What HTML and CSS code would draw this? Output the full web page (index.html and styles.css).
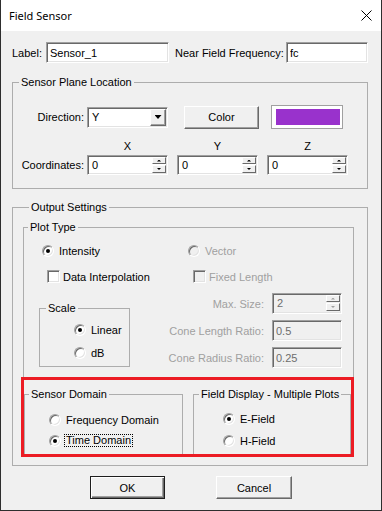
FILE: index.html
```html
<!DOCTYPE html>
<html lang="en">
<head>
  <meta charset="UTF-8" />
  <title>Field Sensor</title>
  <link rel="stylesheet" href="styles.css">
</head>
<body>

  <div class="window">
    <!-- title bar -->
    <div class="titlebar">
      <span class="title">Field Sensor</span>
      <svg class="close" width="11" height="11" viewBox="0 0 11 11">
        <path d="M0.5 0.5L10.5 10.5M10.5 0.5L0.5 10.5" stroke="#000" stroke-width="1" fill="none"/>
      </svg>
    </div>

    <div class="dialog">
      <!-- label + frequency -->
      <div class="label-row">
        <span class="lbl-label">Label:</span>
        <input class="field w-label" value="Sensor_1" />
        <span class="lbl-freq">Near Field Frequency:</span>
        <input class="field w-freq" value="fc" />
      </div>

      <!-- sensor plane -->
      <fieldset class="group plane">
        <legend>Sensor Plane Location</legend>
        <div class="dir-row">
          <span class="row-label">Direction:</span>
          <div class="combo">
            <span class="combo-text">Y</span>
            <span class="combo-btn"></span>
          </div>
          <button class="btn btn-color">Color</button>
          <div class="swatch"><div class="swatch-fill"></div></div>
        </div>
        <div class="axis-row">
          <span class="axis">X</span>
          <span class="axis">Y</span>
          <span class="axis">Z</span>
        </div>
        <div class="coord-row">
          <span class="row-label">Coordinates:</span>
          <div class="spin">
            <span class="spin-text">0</span>
            <span class="spin-btns"><span class="spin-btn up"></span><span class="spin-btn down"></span></span>
          </div>
          <div class="spin">
            <span class="spin-text">0</span>
            <span class="spin-btns"><span class="spin-btn up"></span><span class="spin-btn down"></span></span>
          </div>
          <div class="spin">
            <span class="spin-text">0</span>
            <span class="spin-btns"><span class="spin-btn up"></span><span class="spin-btn down"></span></span>
          </div>
        </div>
      </fieldset>

      <!-- output settings -->
      <fieldset class="group output">
        <legend>Output Settings</legend>

        <fieldset class="group plot">
          <legend>Plot Type</legend>

          <div class="opt-row radios">
            <span class="opt first"><span class="radio on"></span>Intensity</span>
            <span class="opt disabled"><span class="radio off"></span>Vector</span>
          </div>
          <div class="opt-row checks">
            <span class="opt first"><span class="check"></span>Data Interpolation</span>
            <span class="opt disabled"><span class="check off"></span>Fixed Length</span>
          </div>

          <div class="scale-row">
            <fieldset class="group scale">
              <legend>Scale</legend>
              <div class="stack">
                <span class="opt"><span class="radio on"></span>Linear</span>
                <span class="opt"><span class="radio"></span>dB</span>
              </div>
            </fieldset>

            <div class="vector-opts">
              <span class="opt-label">Max. Size:</span>
              <div class="spin off">
                <span class="spin-text">2</span>
                <span class="spin-btns"><span class="spin-btn up"></span><span class="spin-btn down"></span></span>
              </div>
              <span class="opt-label">Cone Length Ratio:</span>
              <input class="field off" value="0.5" />
              <span class="opt-label">Cone Radius Ratio:</span>
              <input class="field off" value="0.25" />
            </div>
          </div>

          <!-- highlighted part -->
          <div class="highlight">
            <fieldset class="group domain">
              <legend>Sensor Domain</legend>
              <div class="stack">
                <span class="opt"><span class="radio"></span>Frequency Domain</span>
                <span class="opt focused"><span class="radio on"></span><span class="focus">Time Domain</span></span>
              </div>
            </fieldset>
            <fieldset class="group display">
              <legend>Field Display - Multiple Plots</legend>
              <div class="stack">
                <span class="opt"><span class="radio on"></span>E-Field</span>
                <span class="opt"><span class="radio"></span>H-Field</span>
              </div>
            </fieldset>
          </div>
        </fieldset>
      </fieldset>

      <div class="actions">
        <button class="btn btn-ok">OK</button>
        <button class="btn btn-cancel">Cancel</button>
      </div>
    </div>
  </div>

</body>
</html>
```

FILE: styles.css
```css
body {
  margin: 0;
  font-family: "Liberation Sans", Arial, sans-serif;
  font-size: 11px;
  color: #000;
  background: #f0f0f0;
}

.window {
  width: 382px;
  height: 511px;
  box-sizing: border-box;
  border: 1px solid #2e2e2e;
  border-top: 0;
  display: flex;
  flex-direction: column;
  background: #f0f0f0;
}

/* title bar */
.titlebar {
  height: 31px;
  flex-shrink: 0;
  background: #fff;
  display: flex;
  align-items: center;
  justify-content: space-between;
  padding: 0 9px 0 8px;
}
.title {
  font-family: "Noto Sans", "Liberation Sans", sans-serif;
  font-size: 11px;
}
.close {
  display: block;
}

.dialog {
  flex: 1;
  padding: 11px 0 0 11px;
}

/* sunken text field */
.field, .combo, .spin {
  box-sizing: border-box;
  border: 1px solid;
  border-color: #a0a0a0 #fff #fff #a0a0a0;
  box-shadow: inset 1px 1px 0 #696969, inset -1px -1px 0 #e3e3e3;
  background: #fff;
}
.field {
  height: 21px;
  margin: 0;
  padding: 0 0 0 3px;
  font: inherit;
  color: #000;
  outline: none;
}
.field.off, .spin.off {
  background: #f0f0f0;
  color: #6d6d6d;
}

/* raised button */
.btn {
  box-sizing: border-box;
  margin: 0;
  padding: 0;
  font: inherit;
  color: #000;
  background: #f0f0f0;
  border: 1px solid;
  border-color: #fff #696969 #696969 #fff;
  box-shadow: inset -1px -1px 0 #a0a0a0;
}

/* group box */
.group {
  box-sizing: border-box;
  margin: 0;
  padding: 0;
  min-width: 0;
  border: 1px solid #adadad;
}
.group > legend {
  padding: 0 2px;
  height: 13px;
  line-height: 13px;
}

/* label row */
.label-row {
  display: flex;
  align-items: center;
  height: 21px;
}
.lbl-label { width: 34px; }
.w-label { width: 123px; }
.lbl-freq { width: 111px; padding-left: 6px; }
.w-freq { width: 82px; }

/* sensor plane */
.plane {
  margin-top: 13px;
  width: 356px;
  padding-bottom: 13px;
}
.plane > legend { margin-left: 6px; }

.row-label {
  width: 71px;
  flex-shrink: 0;
  text-align: right;
}
.dir-row {
  display: flex;
  align-items: center;
  height: 24px;
  margin-top: 16px;
}
.combo {
  margin-left: 3px;
  width: 81px;
  height: 21px;
  padding: 1px;
  display: flex;
  align-items: stretch;
}
.combo-text {
  flex: 1;
  padding-left: 3px;
  line-height: 17px;
}
.combo-btn {
  width: 16px;
  box-sizing: border-box;
  background: #f0f0f0;
  border: 1px solid;
  border-color: #fff #696969 #696969 #fff;
  box-shadow: inset -1px -1px 0 #a0a0a0;
  display: flex;
  align-items: center;
  justify-content: center;
}
.combo-btn::after {
  content: "";
  width: 7px;
  height: 4px;
  background: #000;
  clip-path: polygon(0 0, 100% 0, 50% 100%);
}
.btn-color {
  margin-left: 16px;
  width: 75px;
  height: 23px;
}
.swatch {
  margin-left: 12px;
  width: 72px;
  height: 24px;
  box-sizing: border-box;
  border: 1px solid #a0a0a0;
  background: #fff;
  padding: 3px 2px 3px 4px;
}
.swatch-fill {
  height: 100%;
  background: #9932cc;
}

.axis-row {
  display: flex;
  gap: 9px;
  margin-top: 11px;
  padding-left: 74px;
  height: 13px;
  line-height: 13px;
}
.axis {
  width: 81px;
  text-align: center;
}
.coord-row {
  display: flex;
  align-items: center;
  margin-top: 2px;
  height: 20px;
}
.coord-row .spin { margin-left: 9px; }
.coord-row .spin:first-of-type { margin-left: 3px; }

/* spin box */
.spin {
  width: 81px;
  height: 20px;
  padding: 1px;
  display: flex;
  align-items: stretch;
}
.spin-text {
  flex: 1;
  padding-left: 3px;
  line-height: 16px;
}
.spin-btns {
  width: 14px;
  display: flex;
  flex-direction: column;
  gap: 1px;
}
.spin-btn {
  box-sizing: border-box;
  height: 7px;
  background: #f0f0f0;
  border: 1px solid;
  border-color: #fff #696969 #696969 #fff;
  display: flex;
  align-items: center;
  justify-content: center;
}
.spin-btn.down { height: 8px; }
.spin-btn::after {
  content: "";
  width: 4px;
  height: 2px;
  background: #000;
}
.spin-btn.up::after { clip-path: polygon(50% 0, 100% 100%, 0 100%); }
.spin-btn.down::after { clip-path: polygon(0 0, 100% 0, 50% 100%); }
.spin.off .spin-btn::after { background: #a0a0a0; }

/* output settings */
.output {
  margin-top: 12px;
  width: 356px;
  padding: 7px 0 10px 10px;
}
.output > legend { margin-left: 6px; }

.plot { width: 331px; }
.plot > legend { margin-left: 4px; }

/* radios and checkboxes */
.opt-row {
  display: flex;
  align-items: center;
  height: 13px;
}
.opt {
  display: flex;
  align-items: center;
  gap: 5px;
  height: 13px;
  flex-shrink: 0;
}
.disabled, .opt-label {
  color: #a0a0a0;
}
.radios { margin-top: 10px; }
.radios .first { margin-left: 18px; width: 146px; }
.checks { margin-top: 13px; }
.checks .opt { gap: 3px; }
.checks .first { margin-left: 23px; width: 146px; }

.radio {
  width: 12px;
  height: 12px;
  box-sizing: border-box;
  border-radius: 50%;
  border: 1px solid;
  border-color: #a0a0a0 #fff #fff #a0a0a0;
  box-shadow: inset 1px 1px 0 #696969, inset -1px -1px 0 #e3e3e3;
  background: #fff;
  display: flex;
  align-items: center;
  justify-content: center;
  flex-shrink: 0;
}
.radio.on::after {
  content: "";
  width: 4px;
  height: 4px;
  border-radius: 50%;
  background: #000;
}
.radio.off, .check.off { background: #f0f0f0; }

.check {
  width: 13px;
  height: 13px;
  box-sizing: border-box;
  border: 1px solid;
  border-color: #a0a0a0 #fff #fff #a0a0a0;
  box-shadow: inset 1px 1px 0 #696969, inset -1px -1px 0 #e3e3e3;
  background: #fff;
  flex-shrink: 0;
}

.stack {
  display: flex;
  flex-direction: column;
  gap: 10px;
}

/* scale + vector options */
.scale-row {
  display: flex;
  align-items: flex-start;
  margin-top: 10px;
}
.scale {
  margin: 9px 0 0 15px;
  width: 91px;
  padding: 8px 0 7px 0;
}
.scale > legend { margin-left: 6px; }
.scale .opt { margin-left: 34px; }

.vector-opts {
  display: grid;
  grid-template-columns: 134px 70px;
  grid-auto-rows: 21px;
  column-gap: 8px;
  row-gap: 6px;
  align-items: center;
}
.opt-label { text-align: right; }
.vector-opts .spin { width: 70px; height: 21px; }
.vector-opts .field { width: 70px; }

/* red highlight */
.highlight {
  margin: 9px 0 -3px -3px;
  width: 333px;
  height: 80px;
  box-sizing: border-box;
  border: 3px solid #ec1c24;
  padding-top: 8px;
  display: flex;
  gap: 10px;
}
.domain {
  width: 159px;
  border-bottom: 0;
  padding-top: 12px;
}
.domain > legend { margin-left: 4px; }
.domain .stack { gap: 8px; }
.domain .opt { margin-left: 24px; }
.display {
  width: 158px;
  border-bottom: 0;
  padding-top: 11px;
}
.display > legend { margin-left: 5px; }
.display .stack { gap: 9px; }
.display .opt { margin-left: 29px; }

.opt.focused { gap: 3px; }
.focus {
  border: 1px dotted #000;
  padding: 0 1px;
  line-height: 11px;
}

/* bottom buttons */
.actions {
  display: flex;
  margin-top: 10px;
}
.actions .btn { height: 23px; }
.btn-ok {
  margin-left: 78px;
  width: 75px;
  border: 1px solid #1e1e1e;
  box-shadow: inset 1px 1px 0 #fff, inset -1px -1px 0 #696969, inset -2px -2px 0 #a0a0a0;
}
.btn-cancel {
  margin-left: 51px;
  width: 76px;
}
```
